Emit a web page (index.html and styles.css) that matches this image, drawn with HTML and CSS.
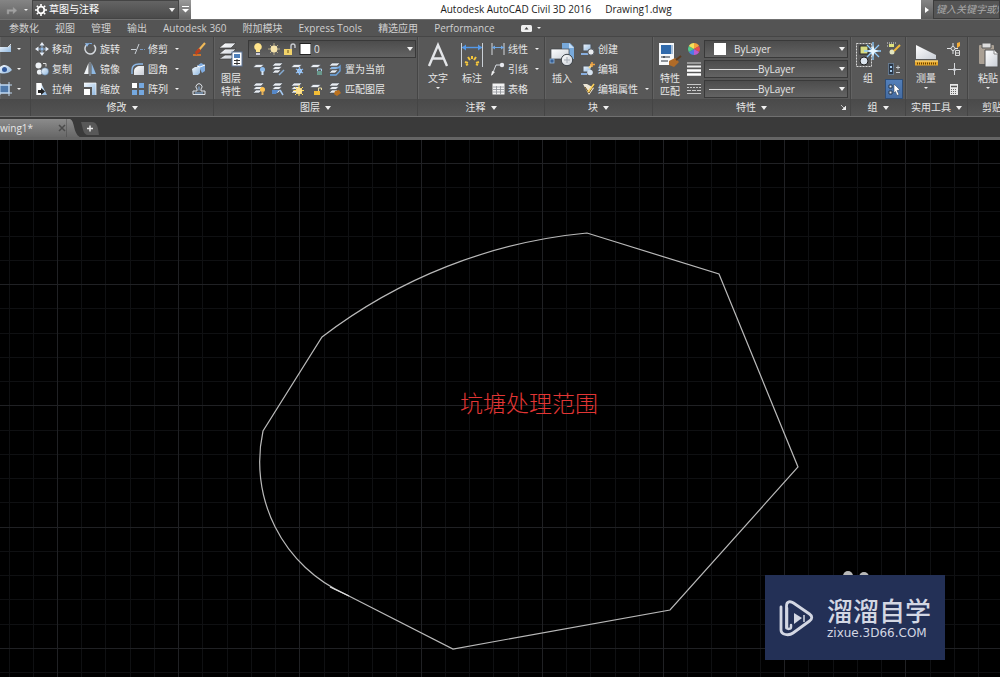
FILE: index.html
```html
<!DOCTYPE html>
<html lang="zh-CN">
<head>
<meta charset="utf-8">
<title>Autodesk AutoCAD Civil 3D 2016 - Drawing1.dwg</title>
<link rel="stylesheet" href="styles.css">
</head>
<body>
<svg class="defs" aria-hidden="true">
  <defs>
    <linearGradient id="blue" x1="0" y1="0" x2="1" y2="1"><stop offset="0" stop-color="#f2f7fc"/><stop offset="1" stop-color="#8fb7df"/></linearGradient>
    <linearGradient id="page" x1="0" y1="0" x2="1" y2="1"><stop offset="0" stop-color="#fff"/><stop offset="1" stop-color="#c9ced6"/></linearGradient>
    <symbol id="stack" viewBox="0 0 14 14"><path d="M4 1h8L9 4H1zM4 4.500h7L8 7.500H1zM4 8h6L7 11H1z" fill="#e9edf2" stroke="#454a50" stroke-width=".6"/></symbol>
    <symbol id="sheet" viewBox="0 0 14 14"><path d="M4 2.500h8L9 5.500H1z" fill="#e9edf2" stroke="#454a50" stroke-width=".6"/></symbol>
    <symbol id="dim" viewBox="0 0 14 14"><path d="M1 1v12M13 1v12" stroke="#d5d8dc"/><path d="M1 5.500h12" stroke="#6fa8e6"/><path d="M1 5.500l3-2v4zM13 5.500l-3-2v4z" fill="#6fa8e6"/></symbol>
  </defs>
</svg>

<header class="titlebar">
  <div class="quick">
    <button class="plain redo" aria-label="重做"><svg width="12" height="10" viewBox="0 0 12 10"><path d="M1 9V4.500h6V2l4 3.500L7 9V6.500H3V9z" fill="#a2a2a2" stroke="#8a8a8a" stroke-width=".5"/></svg></button>
    <i class="caret tiny"></i>
  </div>
  <div class="workspace">
    <svg width="12" height="12" viewBox="0 0 12 12"><circle cx="6" cy="6" r="3.300" fill="none" stroke="#fff" stroke-width="1.800"/><path d="M6 0v2M6 10v2M0 6h2M10 6h2M1.800 1.800l1.400 1.400M8.800 8.800l1.400 1.400M10.200 1.800L8.800 3.200M3.200 8.800l-1.400 1.400" stroke="#fff" stroke-width="1.600"/></svg>
    <select aria-label="工作空间"><option>草图与注释</option></select><i class="caret small"></i>
  </div>
  <button class="plain more" aria-label="自定义"><svg width="7" height="7" viewBox="0 0 7 7"><path d="M0 .5h7" stroke="#fff"/><path d="M0 3h7L3.500 6.500z" fill="#fff"/></svg></button>
  <h1 class="caption"><span>Autodesk AutoCAD Civil 3D 2016</span><span>Drawing1.dwg</span></h1>
  <div class="search"><button class="plain expand" aria-label="展开"><svg width="4" height="6" viewBox="0 0 4 6"><path d="M0 0l4 3-4 3z" fill="#fff"/></svg></button><input type="text" aria-label="搜索" placeholder="键入关键字或短语"></div>
</header>

<nav class="tabs">
  <a href="#">参数化</a><a href="#">视图</a><a href="#">管理</a><a href="#">输出</a><a href="#">Autodesk 360</a><a href="#">附加模块</a><a href="#">Express Tools</a><a href="#">精选应用</a><a href="#">Performance</a>
  <button class="plain minimize" aria-label="最小化功能区"><svg width="11" height="7" viewBox="0 0 11 7"><rect width="11" height="7" rx="1.500" fill="#eee"/><path d="M3.500 4.500h4L5.500 2z" fill="#444"/></svg><i class="caret tiny"></i></button>
</nav>

<main class="ribbon">
  <section class="panel draw">
    <div class="body"><div class="rows">
      <button class="tool" aria-label="矩形"><svg width="13" height="14" viewBox="0 0 13 14"><path d="M0 5h8l3-2v7H0z" fill="url(#blue)"/><path d="M8 5l3-3" stroke="#ddd"/></svg><i class="caret tiny"></i></button>
      <button class="tool" aria-label="椭圆"><svg width="13" height="14" viewBox="0 0 13 14"><path d="M0 5c5-4 9-1 12 3-4 4-8 4-12 3z" fill="url(#blue)"/><circle cx="4.500" cy="7.500" r="2.500" fill="#31589a"/></svg><i class="caret tiny"></i></button>
      <button class="tool" aria-label="填充"><svg width="13" height="14" viewBox="0 0 13 14"><rect x="-2" y="3" width="11" height="8" fill="#4f78a9" stroke="#bfd8f2"/><path d="M0 1v12M9 0v14M0 3h12M0 11h12" stroke="#bfd8f2"/></svg><i class="caret tiny"></i></button>
    </div></div>
    <h2></h2>
  </section>

  <section class="panel modify">
    <div class="body">
      <div class="rows col">
        <button class="tool"><svg width="14" height="14" viewBox="0 0 14 14"><path d="M7 0l2.500 3.500h-5zM7 14l2.500-3.500h-5zM0 7l3.500-2.500v5zM14 7l-3.500-2.500v5z" fill="#e8eef6"/><rect x="5.500" y="5.500" width="3" height="3" fill="#8fb9e8"/><path d="M7 3v2M7 9v2M3 7h2M9 7h2" stroke="#9dbfe4"/></svg>移动</button>
        <button class="tool"><svg width="14" height="14" viewBox="0 0 14 14"><circle cx="3.500" cy="3.500" r="3" fill="#eef2f6"/><circle cx="4.500" cy="10" r="2.600" fill="#eef2f6"/><circle cx="10" cy="9.500" r="3.700" fill="url(#blue)" stroke="#47617f" stroke-width=".5"/><path d="M8 1.500h3v3" fill="none" stroke="#ddd"/></svg>复制</button>
        <button class="tool"><svg width="14" height="14" viewBox="0 0 14 14"><path d="M1.500 1h4.500l6 12H1.500z" fill="url(#blue)"/><rect x="1.500" y="1" width="5" height="12" fill="#fff"/><path d="M3 8h3V6l4 3.500L6 13v-2H3z" fill="#222"/></svg>拉伸</button>
      </div>
      <div class="rows col">
        <button class="tool"><svg width="14" height="14" viewBox="0 0 14 14"><path d="M4 2.500A5.300 5.300 0 1 0 11 3" fill="none" stroke="#d4d8dd" stroke-width="1.500"/><path d="M4.500 2.200a5.300 5.300 0 0 1 4.500-.5" fill="none" stroke="#78aae2"/><path d="M2 1l4 .5L4 5z" fill="#8fb9e8"/></svg>旋转</button>
        <button class="tool"><svg width="14" height="14" viewBox="0 0 14 14"><path d="M5.500 1v11H1z" fill="#eef2f6"/><path d="M8.500 1v11H13z" fill="#8eb8e2"/><path d="M7 0v14" stroke="#b6c4d4" stroke-width=".7"/></svg>镜像</button>
        <button class="tool"><svg width="14" height="14" viewBox="0 0 14 14"><path d="M1 1h12v12H9V5H1z" fill="url(#blue)"/><path d="M1 1h12v12" fill="none" stroke="#fff" stroke-width=".7"/><rect x="1" y="7" width="6" height="6" fill="#fff"/></svg>缩放</button>
      </div>
      <div class="rows wide">
        <button class="tool"><svg width="14" height="14" viewBox="0 0 14 14"><path d="M0 7.500h5M9 7.500h5" stroke="#7b9bc1" stroke-dasharray="3 1"/><path d="M4 12L8 2M0 7.500h5" stroke="#ccd2d8"/></svg>修剪<i class="caret tiny"></i></button>
        <button class="tool"><svg width="14" height="14" viewBox="0 0 14 14"><path d="M3 13V9c0-3 3-5 6-5h4v9z" fill="url(#page)"/><path d="M1 12V8c0-4 3-6 7-6h4" fill="none" stroke="#8bb7e6" stroke-width="1.400"/></svg>圆角<i class="caret tiny"></i></button>
        <button class="tool"><svg width="14" height="14" viewBox="0 0 14 14"><rect x="1" y="1" width="5" height="5" fill="#fff"/><path d="M8 1h5v5H8zM1 8h5v5H1zM8 8h5v5H8z" fill="#75a8df"/></svg>阵列<i class="caret tiny"></i></button>
      </div>
      <div class="rows">
        <button class="tool" aria-label="删除"><svg width="14" height="14" viewBox="0 0 14 14"><path d="M1 13h8" stroke="#ee7b21" stroke-width="1.500"/><path d="M13 1L6 9" stroke="#f0ba58" stroke-width="2"/><path d="M7 6L3 10l1 3 5-4z" fill="#bd3e1b"/></svg></button>
        <button class="tool" aria-label="分解"><svg width="14" height="14" viewBox="0 0 14 14"><path d="M5 4l4-3 4 2v6l-3 2-2-4z" fill="#80ace0"/><path d="M0 7l3-2h5v6l-2 2H1z" fill="url(#blue)"/><path d="M5 4l3 1 5-2" stroke="#fff" fill="none"/></svg></button>
        <button class="tool" aria-label="偏移"><svg width="14" height="14" viewBox="0 0 14 14"><path d="M1 12.500h12V9H9V7a3 3 0 1 0-4 0v2H1z" fill="none" stroke="#dde2e8"/><path d="M3 11h8M7 4.500v4" stroke="#85b4e8"/></svg></button>
      </div>
    </div>
    <h2>修改<i class="caret small"></i></h2>
  </section>

  <section class="panel layers">
    <div class="body">
      <button class="large"><svg width="26" height="26" viewBox="0 0 26 26"><path d="M7 1h11l-5 5H1zM7 7h11l-5 5H1zM7 13h10l-4 4H1z" fill="url(#page)" stroke="#3e3e3e" stroke-width=".7"/><rect x="14" y="10" width="10" height="14" fill="#fff" stroke="#5c7598"/><rect x="16" y="12" width="6" height="4" fill="#4d7fbb"/><path d="M16 18.500h6M16 21.500h6M19 17v6" stroke="#333"/></svg><span>图层<br>特性</span></button>
      <div class="rows fill">
        <div class="combo">
          <svg width="58" height="14" viewBox="0 0 58 14"><path d="M5 1a3.800 3.800 0 0 0-2 7v2h4V8a3.800 3.800 0 0 0-2-7z" fill="#ffe48b"/><path d="M3 11h4v2H3z" fill="#ccd"/><path d="M21 1v12M15 7h12M17 3l8 8M25 3l-8 8" stroke="#b5aa86"/><circle cx="21" cy="7" r="3.400" fill="#f6e3aa"/><path d="M38 7V4a2 2 0 0 1 4 0v2" fill="none" stroke="#c9cbd0" stroke-width="1.400"/><rect x="31" y="7" width="8" height="6" fill="#f2d36a"/><path d="M35 8v3" stroke="#6b551a"/><rect x="47" y="1.500" width="11" height="11" fill="#fff" stroke="#222"/></svg>
          <select aria-label="图层"><option>0</option></select><i class="caret small"></i>
        </div>
        <div class="strip">
          <button class="plain" aria-label="关闭"><svg width="14" height="14"><use href="#sheet"/><circle cx="10.500" cy="7.500" r="2.500" fill="#8dbdf0"/><path d="M10.500 9v4" stroke="#d6e7f8" stroke-width="2"/></svg></button>
          <button class="plain" aria-label="隔离"><svg width="14" height="14"><use href="#stack"/><path d="M8 13l5-5" stroke="#85abd3" stroke-width="1.500"/></svg></button>
          <button class="plain" aria-label="冻结"><svg width="14" height="14"><use href="#sheet"/><circle cx="9.500" cy="9" r="2.500" fill="#cfe3f8"/><path d="M9.500 5v8M6 7l7 4M13 7l-7 4" stroke="#8abbf3" stroke-width="1.300"/></svg></button>
          <button class="plain" aria-label="锁定"><svg width="14" height="14"><use href="#sheet"/><path d="M8.500 9V7h4v2" stroke="#a8cdec" fill="none"/><rect x="8" y="9" width="5" height="4" fill="#69988c"/></svg></button>
          <button class="tool"><svg width="14" height="14"><use href="#stack"/><path d="M3 6h7l2-2v5l-4 4H2" fill="none" stroke="#6ca6e4" stroke-width="1.300"/></svg>置为当前</button>
        </div>
        <div class="strip">
          <button class="plain" aria-label="打开"><svg width="14" height="14"><use href="#stack"/><circle cx="10.500" cy="7.500" r="2.500" fill="#ffc34f"/><path d="M10.500 9v4" stroke="#e4b15b" stroke-width="2"/></svg></button>
          <button class="plain" aria-label="取消隔离"><svg width="14" height="14"><use href="#stack"/><path d="M1 8h7l-3 4H1z" fill="#5688c8"/><path d="M9 8l3 5" stroke="#a5c8f0" stroke-width="1.500"/></svg></button>
          <button class="plain" aria-label="解冻"><svg width="14" height="14"><use href="#stack"/><path d="M9 3v11M3.500 8.500h11M5 5l8 8M13 5l-8 8" stroke="#ffda55"/><circle cx="9" cy="9" r="3.200" fill="#ffe18a"/></svg></button>
          <button class="plain" aria-label="解锁"><svg width="14" height="14"><use href="#sheet"/><path d="M9.500 9V6h3v2" stroke="#eadba0" fill="none"/><rect x="5" y="9" width="6" height="4" fill="#f3bd35"/></svg></button>
          <button class="tool"><svg width="14" height="14"><use href="#stack"/><path d="M7 9l4-1 2 3-4 3-3-2z" fill="#ba711f"/></svg>匹配图层</button>
        </div>
      </div>
    </div>
    <h2>图层<i class="caret small"></i></h2>
  </section>

  <section class="panel annotate">
    <div class="body">
      <button class="large"><svg width="26" height="26" viewBox="0 0 26 26"><path d="M4 24L13 3l9 21M7.500 16.500h11" fill="none" stroke="#e3e5e8" stroke-width="2.400"/></svg><span>文字</span><i class="caret tiny"></i></button>
      <button class="large"><svg width="26" height="26" viewBox="0 0 26 26"><path d="M2.500 1v24M23.500 1v24" stroke="#cbd0d6"/><path d="M3 5.500h20" stroke="#5599e8" stroke-width="1.400"/><path d="M3 5.500l4-3v6zM23 5.500l-4-3v6z" fill="#5599e8"/><path d="M6 20l3 1M9 15l2 3M13 14v3M17 15l-2 3M20 20l-3 1M7 23l2-1M19 23l-2-1" stroke="#f5c73c" stroke-width="2"/></svg><span>标注</span></button>
      <div class="rows fill">
        <button class="tool"><svg width="14" height="14"><use href="#dim"/></svg>线性<i class="caret tiny"></i></button>
        <button class="tool"><svg width="14" height="14" viewBox="0 0 14 14"><path d="M1 13L5 3h4" fill="none" stroke="#d7dce2"/><path d="M0 14l1-5 3 1z" fill="#eee"/><circle cx="11" cy="3" r="2.200" fill="#e8eaf0"/></svg>引线<i class="caret tiny"></i></button>
        <button class="tool"><svg width="14" height="14" viewBox="0 0 14 14"><rect x="1.500" y="1.500" width="12" height="11" fill="#f4f4f4"/><path d="M2 5h11M2 7.500h11M2 10h11M5.500 4v8.500M9.500 4v8.500" stroke="#8d9197" stroke-width=".8"/></svg>表格</button>
      </div>
    </div>
    <h2>注释<i class="caret small"></i></h2>
  </section>

  <section class="panel block">
    <div class="body">
      <button class="large"><svg width="26" height="26" viewBox="0 0 26 26"><path d="M13 1h8l4 4v12H13z" fill="#78a9da"/><path d="M20 1v5h5z" fill="#c6def5"/><path d="M2 7h18v10H2z" fill="url(#page)" stroke="#3e4348" stroke-width=".7"/><circle cx="18" cy="18" r="5.700" fill="url(#page)" stroke="#3d4349"/><path d="M15 18h6M18 15v6" stroke="#a5acb5"/><rect x="1" y="17" width="4" height="4" fill="#385f92" stroke="#9bc2ea" stroke-width=".7"/></svg><span>插入</span></button>
      <div class="rows fill">
        <button class="tool"><svg width="14" height="14" viewBox="0 0 14 14"><path d="M2 2h8v7H2z" fill="url(#blue)" stroke="#4d535a"/><path d="M0 12h7" stroke="#88aede" stroke-width="2"/><circle cx="10" cy="10" r="3.200" fill="#e8ebef" stroke="#4d535a"/></svg>创建</button>
        <button class="tool"><svg width="14" height="14" viewBox="0 0 14 14"><path d="M2 4h8v6H2z" fill="url(#blue)" stroke="#4d535a"/><path d="M0 12h6" stroke="#88aede" stroke-width="2"/><circle cx="9" cy="10.500" r="2.800" fill="#d6e2ef"/><path d="M8 6l3-3" stroke="#f1d287" stroke-width="2"/><path d="M11 0v5M9 2.500h5" stroke="#f0a544" stroke-width="1.500"/></svg>编辑</button>
        <button class="tool"><svg width="14" height="14" viewBox="0 0 14 14"><path d="M2 2h4l7 4-5 7z" fill="#ece6d6"/><path d="M4 5l4 6 5-8" fill="none" stroke="#6c4c14"/><path d="M7 10l6-8" stroke="#ffd35c" stroke-width="1.500"/></svg>编辑属性<i class="caret tiny"></i></button>
      </div>
    </div>
    <h2>块<i class="caret small"></i></h2>
  </section>

  <section class="panel props">
    <div class="body">
      <button class="large"><svg width="26" height="26" viewBox="0 0 26 26"><rect x="2" y="1" width="15" height="22" fill="#f6f8fa"/><rect x="4" y="3" width="10" height="9" fill="#2f6aac"/><path d="M15 3v9" stroke="#5c88ba"/><path d="M4 15h9M4 19h7M7 14v2" stroke="#27313c" stroke-width="1.200"/><path d="M12 19l6-3 4 4-5 5-5-2z" fill="#b06b28"/><path d="M19 18l5-4" stroke="#5d3a1c" stroke-width="2"/></svg><span>特性<br>匹配</span></button>
      <div class="rows marks">
        <svg width="14" height="14" viewBox="0 0 14 14"><path d="M7 7V1a6 6 0 0 1 5.200 3z" fill="#f6a33b"/><path d="M7 7l5.200-3a6 6 0 0 1 0 6z" fill="#e44c50"/><path d="M7 7l5.200 3A6 6 0 0 1 7 13z" fill="#bb5ad0"/><path d="M7 7v6a6 6 0 0 1-5.200-3z" fill="#4b7de4"/><path d="M7 7l-5.200 3a6 6 0 0 1 0-6z" fill="#51c98d"/><path d="M7 7L1.800 4A6 6 0 0 1 7 1z" fill="#f3e15a"/></svg>
        <svg width="14" height="14" viewBox="0 0 14 14"><path d="M0 1h14" stroke="#ddd"/><path d="M0 4.500h14" stroke="#eee" stroke-width="2"/><path d="M0 8.500h14M0 12.500h14" stroke="#fff" stroke-width="2.500"/></svg>
        <svg width="14" height="14" viewBox="0 0 14 14"><path d="M0 2.500h14M0 11.500h14" stroke="#c9c9c9"/><path d="M0 5.500h14" stroke="#c9c9c9" stroke-dasharray="2 1"/><path d="M0 8.500h14" stroke="#c9c9c9" stroke-dasharray="4 1"/></svg>
      </div>
      <div class="rows fill">
        <div class="combo color"><i class="swatch"></i><select aria-label="颜色"><option>ByLayer</option></select><i class="caret small"></i></div>
        <div class="combo line"><i class="rule"></i><select aria-label="线宽"><option>ByLayer</option></select><i class="caret small"></i></div>
        <div class="combo line"><i class="rule"></i><select aria-label="线型"><option>ByLayer</option></select><i class="caret small"></i></div>
      </div>
    </div>
    <h2>特性<i class="caret small"></i><button class="plain launcher" aria-label="特性选项板"><svg width="5" height="5" viewBox="0 0 5 5"><path d="M0 0l3 3M5 1v4H1z" fill="#eee" stroke="#eee" stroke-width=".7"/></svg></button></h2>
  </section>

  <section class="panel group">
    <div class="body">
      <button class="large"><svg width="26" height="26" viewBox="0 0 26 26"><rect x="1.500" y="1.500" width="15" height="23" fill="none" stroke="#d7d7d7" stroke-dasharray="2 1"/><rect x="5" y="4" width="8" height="8" fill="#d7dc83" stroke="#222"/><circle cx="9" cy="19" r="4" fill="#dce5ee" stroke="#222"/><path d="M18 0v18M9 9h17M12 3l12 12M24 3L12 15" stroke="#8dccff" stroke-width="1.300"/><path d="M18 3l1.500 4.500L24 9l-4.500 1.500L18 15l-1.500-4.500L12 9l4.500-1.500z" fill="#e8f7ff"/></svg><span>组</span></button>
      <div class="rows">
        <button class="tool" aria-label="解除编组"><svg width="14" height="14" viewBox="0 0 14 14"><rect x="2" y="2" width="5" height="3" fill="#dfe27c"/><circle cx="5" cy="10" r="2.500" fill="#e4e6c0"/><path d="M7 9l6-6" stroke="#f0b83b" stroke-width="2"/><path d="M0 1h9M0 4h1" stroke="#ddd" stroke-dasharray="1 1"/></svg></button>
        <button class="tool" aria-label="组编辑"><svg width="14" height="14" viewBox="0 0 14 14"><rect x="1.500" y="1.500" width="5" height="11" fill="#293646" stroke="#86a9cc" stroke-dasharray="1 1"/><path d="M3 4h2v2H3zM3 8h2v2H3z" fill="#a4cbef"/><path d="M9 5.500h4M11 3.500v4M9 10.500h4" stroke="#c5cad0"/></svg></button>
        <button class="tool active" aria-label="启用组选择"><svg width="14" height="14" viewBox="0 0 14 14"><path d="M2 3h3v3H2zM2 9h3v3H2z" fill="#e1e8f1" stroke="#26374b"/><path d="M7 2l6 6-3 .5 2 4-2 1-1.500-4L7 11z" fill="#fff" stroke="#26374b" stroke-width=".5"/></svg></button>
      </div>
    </div>
    <h2>组<i class="caret small"></i></h2>
  </section>

  <section class="panel utils">
    <div class="body">
      <button class="large"><svg width="26" height="26" viewBox="0 0 26 26"><path d="M3 3l20 10v4H3z" fill="url(#page)"/><path d="M2 18.500h23v5H2z" fill="#e9a92b"/><path d="M2 19h23" stroke="#ffe28d"/><path d="M4 21.500h20" stroke="#6a4200" stroke-width="2" stroke-dasharray="1 1"/></svg><span>测量</span><i class="caret tiny"></i></button>
      <div class="rows">
        <button class="tool" aria-label="快速选择"><svg width="14" height="14" viewBox="0 0 14 14"><path d="M6 1v11M0 6.500h11" stroke="#e3e5e8"/><circle cx="6" cy="6.500" r="2" fill="#646464" stroke="#ddd"/><path d="M10 1l3-1v4l-3 2z" fill="#f5ad37"/><path d="M8.500 8.500h4v5h-4zM8.500 11h4" fill="none" stroke="#ddd"/></svg></button>
        <button class="tool" aria-label="点"><svg width="14" height="14" viewBox="0 0 14 14"><path d="M7.500 1v12M1 7.500h13" stroke="#d5d7da"/><circle cx="7.500" cy="7.500" r="1.500" fill="#d0d3d8"/></svg></button>
        <button class="tool" aria-label="计算器"><svg width="14" height="14" viewBox="0 0 14 14"><rect x="3" y="2" width="8" height="11" fill="#e8e8e8"/><path d="M4 4.500h6" stroke="#555" stroke-width="1.500"/><path d="M4 7.500h6M4 9.500h6M4 11.500h6" stroke="#666" stroke-dasharray="1 1"/></svg></button>
      </div>
    </div>
    <h2>实用工具<i class="caret small"></i></h2>
  </section>

  <section class="panel clip">
    <div class="body"><button class="large"><svg width="26" height="26" viewBox="0 0 26 26"><rect x="4" y="3" width="15" height="19" rx="1" fill="#aaa094"/><path d="M7 1h9v5H7z" fill="#ddd" stroke="#575757"/><path d="M10 8h9l4 4v13H10z" fill="url(#page)" stroke="#505050"/><path d="M19 8v4h4" fill="#fff" stroke="#888"/></svg><span>粘贴</span><i class="caret tiny"></i></button></div>
    <h2>剪贴板</h2>
  </section>
</main>

<div class="files">
  <div class="file"><a href="#">wing1*</a><button class="plain close" aria-label="关闭图形"><svg width="8" height="8" viewBox="0 0 8 8"><path d="M1 1l6 6M7 1L1 7" stroke="#4b4b4b" stroke-width="1.500"/></svg></button></div>
  <svg class="slope" width="14" height="19" viewBox="0 0 14 19" aria-hidden="true"><defs><linearGradient id="tab" x1="0" y1="0" x2="0" y2="1"><stop offset="0" stop-color="#8b8b8b"/><stop offset="1" stop-color="#686868"/></linearGradient></defs><path d="M0 0h4c5 2 3 15 10 19H0z" fill="url(#tab)"/></svg>
  <button class="plain add" aria-label="新图形"><svg width="18" height="13" viewBox="0 0 18 13"><path d="M0 0h11c5 0 6 5 7 13H7C2 13 2 6 0 0z" fill="#585858"/><path d="M9 3.500v6M6 6.500h6" stroke="#e8e8e8" stroke-width="1.500"/></svg></button>
</div>

<section class="canvas" aria-label="绘图区">
  <svg class="drawing" aria-hidden="true">
    <path id="minor" stroke="#0f1012"/><path id="major" stroke="#202124"/>
    <g fill="none" stroke="#b9b9b9" stroke-width="1.200">
      <path d="M322 197A516 516 0 0 1 587 93L719 134 798 327 670 470 453 509 345 454A145 145 0 0 1 263 291Z"/>
      <path d="M330 447L349 456" stroke="#e0e0e0"/>
    </g>
    <g fill="#b9b9b9"><circle cx="848" cy="436" r="5"/><circle cx="864" cy="437" r="5"/></g>
  </svg>
  <p class="note">坑塘处理范围</p>
  <div class="brand">
    <svg width="36" height="38" viewBox="0 0 36 38"><path d="M7.500 29V7c0-5 4-5 7-3l16 11c3 2 3 5 0 7L14 34c-4 3-12 2-12-3V8" fill="none" stroke="#d3d7e3" stroke-width="2.800" stroke-linecap="round"/><path d="M8 9v19c0 3 4 2 4 0v-2" fill="none" stroke="#d3d7e3" stroke-width="2.500" stroke-linecap="round"/><path d="M15 14l8 5-8 6z" fill="#d3d7e3"/><path d="M25 16v7" stroke="#d3d7e3" stroke-width="1.500"/></svg>
    <div class="name"><strong>溜溜自学</strong><span>zixue.3D66.COM</span></div>
  </div>
</section>
<script src="grid.js"></script>
</body>
</html>
```
FILE: styles.css
```css
* { box-sizing: border-box; }
body {
  margin: 0;
  min-height: 100vh;
  display: flex;
  flex-direction: column;
  overflow: hidden;
  background: #000;
  color: #e6e6e6;
  font: 10px/13px "Open Sans", "Noto Sans CJK SC", sans-serif;
}
.defs { position: absolute; width: 0; height: 0; }
svg { display: block; flex: none; }
button, select, input { font: inherit; color: inherit; margin: 0; padding: 0; border: 0; background: none; }
select { appearance: none; flex: 1; min-width: 0; height: 100%; }
option { color: #222; }
a { color: inherit; text-decoration: none; white-space: nowrap; }
h1, h2, p { margin: 0; font-size: inherit; font-weight: 400; }
.plain { display: flex; align-items: center; justify-content: center; }
.caret { flex: none; border: 0 solid transparent; border-top-color: #f0f0f0; }
.caret.small { border-width: 4px 3px 0; }
.caret.tiny { border-width: 2px 2px 0; }

.titlebar { display: flex; height: 20px; background: #fff; border-bottom: 1px solid #707070; }
.quick { display: flex; align-items: center; gap: 6px; width: 32px; padding-left: 6px; background: linear-gradient(#858585, #626262); }
.workspace { display: flex; align-items: center; gap: 2px; width: 147px; padding: 0 3px 0 2px; border: 1px solid #444; background: linear-gradient(#646464, #4a4a4a); color: #fff; }
.more { width: 12px; background: linear-gradient(#999, #666); }
.caption { flex: 1; display: flex; align-items: center; justify-content: center; gap: 14px; color: #1c1c1c; white-space: nowrap; }
.search { display: flex; width: 79px; overflow: hidden; background: #5c5c5c; }
.expand { width: 12px; background: linear-gradient(#858585, #5a5a5a); }
.search input { flex: 1; min-width: 0; padding-left: 2px; border: 1px solid #3c3c3c; background: #555; font-style: italic; }
.search input::placeholder { color: #a9a9a9; }

.tabs { display: flex; align-items: center; gap: 16px; height: 17px; padding-left: 9px; background: #545454; border-bottom: 1px solid #464646; color: #d0d0d0; }
.minimize { gap: 5px; margin-left: 10px; }

.ribbon { display: flex; height: 80px; overflow: hidden; background: #585858; border-bottom: 1px solid #707070; }
.panel { flex: none; display: flex; flex-direction: column; border-right: 1px solid #454545; box-shadow: inset 1px 0 #626262; }
.body { flex: 1; display: flex; padding-top: 2px; }
.panel h2 { display: flex; align-items: center; justify-content: center; gap: 5px; height: 17px; background: linear-gradient(#4a4a4a, #535353); white-space: nowrap; }
.rows { display: flex; flex-direction: column; }
.fill { flex: 1; min-width: 0; }
.col { width: 48px; }
.wide { width: 61px; }
.tool { display: flex; align-items: center; gap: 3px; height: 20px; white-space: nowrap; }
.tool .caret { margin-left: 4px; }
.large { flex: none; display: flex; flex-direction: column; align-items: center; gap: 4px; width: 34px; padding-top: 3px; line-height: 13px; }
.large .caret { margin-top: -2px; }
.combo { display: flex; align-items: center; height: 18px; margin: 1px 1px 1px 0; padding: 0 2px 0 4px; border: 1px solid #393939; background: linear-gradient(#4c4c4c, #636363); }
.strip { display: flex; gap: 5px; height: 20px; align-items: center; padding-left: 4px; }

.draw { width: 31px; }
.draw .tool .caret { margin-left: 1px; }
.modify { width: 183px; }
.modify .body { padding-left: 4px; }
.layers { width: 204px; }
.layers .combo { gap: 3px; }
.annotate { width: 127px; }
.annotate .body { padding-left: 3px; }
.annotate .fill { padding-left: 2px; }
.block { width: 108px; }
.block .fill { padding-left: 2px; }
.props { width: 198px; }
.props .combo { margin-right: 2px; }
.props h2 { position: relative; }
.launcher { position: absolute; right: 4px; bottom: 6px; }
.marks { width: 17px; padding-top: 3px; gap: 6px; }
.color { gap: 8px; }
.color .swatch { width: 12px; height: 12px; margin-left: 5px; background: #fff; }
.line .rule { width: 49px; height: 1px; background: #ddd; }
.group { width: 55px; }
.group .tool { width: 18px; justify-content: center; }
.active { background: linear-gradient(#527fba, #456ca2); border: 1px solid #2f4d75; }
.utils { width: 62px; }
.utils .body { padding-left: 3px; }
.utils .rows { padding-left: 4px; }
.clip { flex: 1 0 45px; }
.clip .body { padding-left: 3px; }
.clip h2 { justify-content: flex-start; padding-left: 14px; }

.files { display: flex; height: 23px; padding-top: 2px; background: #3a3a3a; border-bottom: 3px solid #656565; }
.file { display: flex; align-items: center; justify-content: space-between; width: 66px; background: linear-gradient(#8b8b8b, #686868); }
.slope { height: 18px; }
.add { margin-left: 1px; }

.canvas { position: relative; flex: 1; min-height: 537px; overflow: hidden; background: #000; }
.drawing { position: absolute; inset: 0; width: 100%; height: 100%; }
#minor, #major { shape-rendering: crispEdges; }
.note { position: absolute; left: 460px; top: 248px; color: #e23635; font-size: 23px; font-weight: 300; line-height: 30px; }
.brand { position: absolute; right: 55px; bottom: 17px; width: 180px; height: 85px; display: flex; align-items: center; gap: 12px; padding-left: 14px; background: #233056; color: #d3d7e3; }
.name { display: flex; flex-direction: column; }
.brand strong { font-size: 26px; line-height: 30px; font-weight: 500; }
.brand span { font: 12px/14px "DejaVu Sans", sans-serif; }
```
FILE: grid.js
```js
// Draws the background grid: every fifth line is a major line.
const STEP = 24.24;
const canvas = document.querySelector('.canvas');

function drawGrid() {
  const w = canvas.clientWidth, h = canvas.clientHeight;
  let minor = '', major = '';
  for (let i = -2; 57 + i * STEP < w; i++) {
    const line = `M${Math.round(57 + i * STEP) + 0.5} 0V${h}`;
    if (i % 5) minor += line; else major += line;
  }
  for (let i = 0; 24 + i * STEP < h; i++) {
    const line = `M0 ${Math.round(24 + i * STEP) - 0.5}H${w}`;
    if (i % 5) minor += line; else major += line;
  }
  document.getElementById('minor').setAttribute('d', minor);
  document.getElementById('major').setAttribute('d', major);
}

drawGrid();
window.addEventListener('resize', drawGrid);
```
